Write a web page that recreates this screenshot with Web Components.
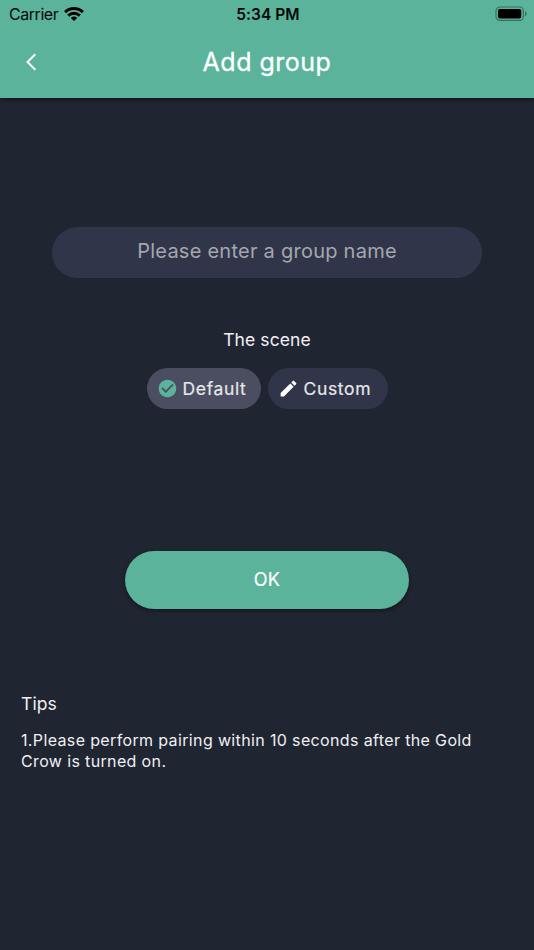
<!DOCTYPE html>
<html lang="en">
<head>
<meta charset="utf-8">
<title>Add group</title>
<style>
  body {
    margin: 0;
    background: #202532;
    color: #f0f0f2;
    font-family: Inter, "Liberation Sans", sans-serif;
  }
</style>
</head>
<body>
<add-group-page></add-group-page>

<script>
class StatusBar extends HTMLElement {
  constructor() {
    super();
    this.shadowDOM = this.attachShadow({ mode: 'open' });
  }

  connectedCallback() {
    this.shadowDOM.innerHTML = `
      <style>
        :host {
          display: grid;
          grid-template-columns: 1fr auto 1fr;
          align-items: center;
          box-sizing: border-box;
          height: 26px;
          padding: 0 7px 0 9px;
          color: #050807;
          font-size: 16px;
          line-height: 26px;
        }
        .network {
          display: flex;
          align-items: center;
          gap: 6px;
          padding-bottom: 1px;
          letter-spacing: -0.45px;
        }
        .time {
          padding-top: 2px;
          font-size: 15.5px;
          font-weight: 600;
          letter-spacing: 0.05px;
        }
        .battery {
          justify-self: end;
        }
        svg {
          display: block;
        }
      </style>
      <div class="network">
        <span>${this.getAttribute('carrier')}</span>
        <svg width="20" height="16" viewBox="0 0 20 16" fill="none" stroke="#000" stroke-width="2.9">
          <path d="M1.1 6.1a12.8 12.8 0 0 1 17.8 0"/>
          <path d="M4.2 9.6a8.4 8.4 0 0 1 11.6 0"/>
          <path d="M10 15.1 6.8 12a4.7 4.7 0 0 1 6.4 0z" fill="#000" stroke="none"/>
        </svg>
      </div>
      <span class="time">${this.getAttribute('time')}</span>
      <svg class="battery" width="32" height="16" viewBox="0 0 32 16">
        <rect x="1" y="1" width="27.4" height="13.4" rx="4" fill="none" stroke="#37705f" stroke-width="1.2"/>
        <rect x="3" y="3" width="23.3" height="9.4" rx="2" fill="#000"/>
        <path d="M30 5.3c2.2.8 2.2 4 0 4.8z" fill="#37705f"/>
      </svg>
    `;
  }
}

class NavBar extends HTMLElement {
  constructor() {
    super();
    this.shadowDOM = this.attachShadow({ mode: 'open' });
  }

  connectedCallback() {
    this.shadowDOM.innerHTML = `
      <style>
        :host {
          display: grid;
          grid-template-columns: 62px 1fr 62px;
          align-items: center;
          box-sizing: border-box;
          height: 72px;
          padding-bottom: 1px;
          color: #fff;
        }
        svg {
          display: block;
          justify-self: center;
        }
        h1 {
          margin: 0;
          font-size: 25px;
          font-weight: 400;
          line-height: 70px;
          letter-spacing: 0.5px;
          text-align: center;
          -webkit-text-stroke: 0.3px;
        }
      </style>
      <svg width="12" height="18" viewBox="0 0 12 18" fill="none" stroke="#fff" stroke-width="2">
        <path d="M10.3 1.2 2.5 9l7.8 7.8"/>
      </svg>
      <h1><slot></slot></h1>
    `;
  }
}

class GroupInput extends HTMLElement {
  constructor() {
    super();
    this.shadowDOM = this.attachShadow({ mode: 'open' });
  }

  connectedCallback() {
    this.shadowDOM.innerHTML = `
      <style>
        :host {
          display: block;
          box-sizing: border-box;
          width: 430px;
          height: 51px;
          border-radius: 26px;
          background: #303549;
          color: #a5a7ae;
          font-size: 20px;
          line-height: 49px;
          letter-spacing: 0.25px;
          text-align: center;
        }
      </style>
      <slot></slot>
    `;
  }
}

class SceneChip extends HTMLElement {
  constructor() {
    super();
    this.shadowDOM = this.attachShadow({ mode: 'open' });
  }

  connectedCallback() {
    this.shadowDOM.innerHTML = `
      <style>
        :host {
          display: flex;
          align-items: center;
          box-sizing: border-box;
          width: 120px;
          height: 41px;
          padding-left: 10px;
          gap: 5px;
          border-radius: 21px;
          background: #303549;
          color: #e6e7ea;
          font-size: 17.5px;
          line-height: 20px;
          letter-spacing: 0.65px;
          -webkit-text-stroke: 0.2px;
        }
        :host([selected]) {
          width: 114px;
          background: #4a4e60;
        }
        ::slotted(svg) {
          display: block;
          flex: none;
        }
      </style>
      <slot name="icon"></slot>
      <span><slot></slot></span>
    `;
  }
}

class PrimaryButton extends HTMLElement {
  constructor() {
    super();
    this.shadowDOM = this.attachShadow({ mode: 'open' });
  }

  connectedCallback() {
    this.shadowDOM.innerHTML = `
      <style>
        :host {
          display: block;
          width: 284px;
          height: 58px;
          border-radius: 29px;
          background: #5ab39a;
          box-shadow: 0 2px 4px rgba(0, 0, 0, 0.4);
          color: #fff;
          font-size: 18px;
          line-height: 57px;
          letter-spacing: 0.4px;
          text-align: center;
          -webkit-text-stroke: 0.2px;
        }
      </style>
      <slot></slot>
    `;
  }
}

class TipsList extends HTMLElement {
  constructor() {
    super();
    this.shadowDOM = this.attachShadow({ mode: 'open' });
  }

  connectedCallback() {
    this.shadowDOM.innerHTML = `
      <style>
        :host {
          display: block;
          box-sizing: border-box;
          width: 100%;
          padding: 0 40px 0 21px;
        }
        h2 {
          margin: 0 0 15px;
          font-size: 17.5px;
          font-weight: 400;
          line-height: 22px;
          letter-spacing: 0.1px;
        }
        p {
          margin: 0;
          font-size: 16px;
          line-height: 20.5px;
          letter-spacing: 0.36px;
        }
      </style>
      <h2>${this.getAttribute('heading')}</h2>
      <p><slot></slot></p>
    `;
  }
}

class AddGroupPage extends HTMLElement {
  constructor() {
    super();
    this.shadowDOM = this.attachShadow({ mode: 'open' });
  }

  connectedCallback() {
    this.shadowDOM.innerHTML = `
      <style>
        :host {
          display: block;
          height: 950px;
          overflow: hidden;
        }
        header {
          background: #5ab39a;
          box-shadow: 0 1px 5px rgba(0, 0, 0, 0.6);
        }
        main {
          display: flex;
          flex-direction: column;
          align-items: center;
          padding-top: 129px;
        }
        .label {
          margin: 51px 0 17px;
          font-size: 17.5px;
          line-height: 22px;
          letter-spacing: 0.1px;
        }
        .chips {
          display: flex;
          gap: 7px;
        }
        primary-button {
          margin: 142px 0 84px;
        }
      </style>
      <header>
        <status-bar carrier="Carrier" time="5:34 PM"></status-bar>
        <nav-bar>Add group</nav-bar>
      </header>
      <main>
        <group-input>Please enter a group name</group-input>
        <div class="label">The scene</div>
        <div class="chips">
          <scene-chip selected>
            <svg slot="icon" width="21" height="21" viewBox="0 0 24 24" fill="#5ab39a">
              <path d="M12 2C6.48 2 2 6.48 2 12s4.48 10 10 10 10-4.48 10-10S17.52 2 12 2zm-2 15-5-5 1.41-1.41L10 14.17l7.59-7.59L19 8l-9 9z"/>
            </svg>Default
          </scene-chip>
          <scene-chip>
            <svg slot="icon" width="21" height="21" viewBox="0 0 24 24" fill="#fff">
              <path d="M3 17.25V21h3.75L17.81 9.94l-3.75-3.75L3 17.25zM20.71 7.04a1 1 0 0 0 0-1.41l-2.34-2.34a1 1 0 0 0-1.41 0l-1.83 1.83 3.75 3.75 1.83-1.83z"/>
            </svg>Custom
          </scene-chip>
        </div>
        <primary-button>OK</primary-button>
        <tips-list heading="Tips">1.Please perform pairing within 10 seconds after the Gold Crow is turned on.</tips-list>
      </main>
    `;
  }
}

customElements.define('status-bar', StatusBar);
customElements.define('nav-bar', NavBar);
customElements.define('group-input', GroupInput);
customElements.define('scene-chip', SceneChip);
customElements.define('primary-button', PrimaryButton);
customElements.define('tips-list', TipsList);
customElements.define('add-group-page', AddGroupPage);
</script>
</body>
</html>
